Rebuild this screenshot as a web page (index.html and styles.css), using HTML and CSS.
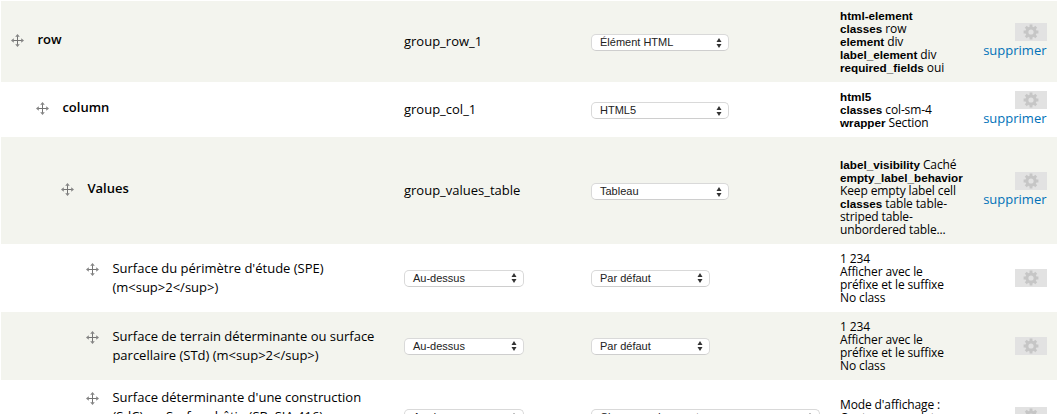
FILE: index.html
```html
<!DOCTYPE html>
<html lang="fr">
<head>
<meta charset="utf-8">
<title>Gérer l'affichage</title>
<link rel="stylesheet" href="styles.css">
</head>
<body>
<svg width="0" height="0" class="defs">
  <symbol id="move" viewBox="0 0 13 13">
    <path d="M6.5 1.5v10M1.5 6.5h10" stroke="#747474" stroke-width="1" fill="none"/>
    <path d="M6.5 0l2.3 2.8H4.2zM6.5 13l2.3-2.8H4.2zM0 6.5l2.8-2.3v4.6zM13 6.5l-2.8-2.3v4.6z" fill="#858585"/>
  </symbol>
  <symbol id="gear" viewBox="0 0 16 16">
    <circle cx="8" cy="8" r="4.1" fill="none" stroke="#c6c6c6" stroke-width="3"/>
    <path d="M8 .6v2.6M8 12.8v2.6M.6 8h2.6M12.8 8h2.6M2.8 2.8l1.9 1.9M11.3 11.3l1.9 1.9M2.8 13.2l1.9-1.9M11.3 4.7l1.9-1.9" stroke="#c6c6c6" stroke-width="2.8" fill="none"/>
  </symbol>
  <symbol id="arrows" viewBox="0 0 6 10">
    <path d="M3 0l2.5 4H.5zM3 10l2.5-4H.5z" fill="#333"/>
  </symbol>
</svg>
<main class="table">
  <div class="row h-row group odd">
    <div class="name"><svg class="move"><use href="#move"/></svg><b class="label">row</b></div>
    <div class="machine">group_row_1</div>
    <div><span class="select wide">Élément HTML<svg><use href="#arrows"/></svg></span></div>
    <div class="summary"><b>html-element</b><br><b>classes</b> row<br><b>element</b> div<br><b>label_element</b> div<br><b>required_fields</b> oui</div>
    <div class="actions"><span class="gear"><svg><use href="#gear"/></svg></span><a>supprimer</a></div>
  </div>
  <div class="row h-column group">
    <div class="name depth-1"><svg class="move"><use href="#move"/></svg><b class="label">column</b></div>
    <div class="machine">group_col_1</div>
    <div><span class="select wide">HTML5<svg><use href="#arrows"/></svg></span></div>
    <div class="summary"><b>html5</b><br><b>classes</b> col-sm-4<br><b>wrapper</b> Section</div>
    <div class="actions"><span class="gear"><svg><use href="#gear"/></svg></span><a>supprimer</a></div>
  </div>
  <div class="row h-values group odd">
    <div class="name depth-2"><svg class="move"><use href="#move"/></svg><b class="label">Values</b></div>
    <div class="machine">group_values_table</div>
    <div><span class="select wide">Tableau<svg><use href="#arrows"/></svg></span></div>
    <div class="summary"><br><b>label_visibility</b> Caché<br><b>empty_label_behavior</b><br>Keep empty label cell<br><b>classes</b> table table-<br>striped table-<br>unbordered table...</div>
    <div class="actions"><span class="gear"><svg><use href="#gear"/></svg></span><a>supprimer</a></div>
  </div>
  <div class="row h-field">
    <div class="name depth-3"><svg class="move"><use href="#move"/></svg><span class="label">Surface du périmètre d'étude (SPE)<br>(m&lt;sup&gt;2&lt;/sup&gt;)</span></div>
    <div><span class="select">Au-dessus<svg><use href="#arrows"/></svg></span></div>
    <div><span class="select format">Par défaut<svg><use href="#arrows"/></svg></span></div>
    <div class="summary">1 234<br>Afficher avec le<br>préfixe et le suffixe<br>No class</div>
    <div class="actions"><span class="gear"><svg><use href="#gear"/></svg></span></div>
  </div>
  <div class="row h-field odd">
    <div class="name depth-3"><svg class="move"><use href="#move"/></svg><span class="label">Surface de terrain déterminante ou surface<br>parcellaire (STd) (m&lt;sup&gt;2&lt;/sup&gt;)</span></div>
    <div><span class="select">Au-dessus<svg><use href="#arrows"/></svg></span></div>
    <div><span class="select format">Par défaut<svg><use href="#arrows"/></svg></span></div>
    <div class="summary">1 234<br>Afficher avec le<br>préfixe et le suffixe<br>No class</div>
    <div class="actions"><span class="gear"><svg><use href="#gear"/></svg></span></div>
  </div>
  <div class="row h-last">
    <div class="name depth-3"><svg class="move"><use href="#move"/></svg><span class="label">Surface déterminante d'une construction<br>(SdC) ou Surface bâtie (SB, SIA 416)</span></div>
    <div><span class="select">Au-dessus<svg><use href="#arrows"/></svg></span></div>
    <div><span class="select widest">Champ rendu avec t<svg><use href="#arrows"/></svg></span></div>
    <div class="summary">Mode d'affichage :<br>Contenu complet</div>
    <div class="actions"><span class="gear"><svg><use href="#gear"/></svg></span></div>
  </div>
</main>
</body>
</html>
```

FILE: styles.css
```css
* { box-sizing: border-box; }
html { overflow: hidden; }
body {
  margin: 0;
  height: 414px;
  overflow: hidden;
  background: #fff;
  color: #000;
  font: 13px/19px "Open Sans", sans-serif;
}
.defs { display: none; }
.table { height: 414px; padding: 1px 1px 0; overflow: hidden; }
.row {
  display: grid;
  grid-template-columns: 403px 187px 249px minmax(0, 1fr) 90px;
  align-items: center;
  padding-right: 10px;
  white-space: nowrap;
}
.odd { background: #f3f4ee; }
.h-row { height: 81px; }
.h-column { height: 55px; }
.h-values { height: 107px; }
.h-field { height: 68px; }
.h-last { height: 34px; align-items: start; overflow: hidden; }
.h-last .name { padding-top: 8px; }
.h-last .select { margin-top: 29px; }
.h-last .summary { padding-top: 18px; }
.h-last .gear { margin-top: 27px; }
.name {
  display: flex;
  align-items: flex-start;
  gap: 13px;
  padding-left: 10px;
}
.name b { font-weight: 600; }
.label { padding-left: .4px; }
.group .name { padding-bottom: 5px; }
.group .select { margin-top: 2px; }
.depth-1 { padding-left: 35px; }
.depth-2 { padding-left: 60px; }
.depth-3 { padding-left: 85px; }
.move { flex: none; width: 13px; height: 13px; margin-top: 4px; }
.select {
  display: flex;
  align-items: center;
  justify-content: space-between;
  width: 120px;
  height: 17px;
  padding: 0 6px 0 8px;
  border: 1px solid #d9d9d9;
  border-bottom-color: #cecece;
  border-radius: 5px;
  background: #fff;
  color: #222;
  font: 11px/15px "Liberation Sans", sans-serif;
}
.select svg { width: 6px; height: 10px; }
.wide { width: 138px; }
.format { width: 119px; }
.widest { width: 229px; }
.summary { font-size: 12px; line-height: 13px; letter-spacing: -.12px; }
.summary b { font: bold 11.7px/1px "Liberation Sans", sans-serif; letter-spacing: 0; }
.actions {
  display: flex;
  flex-direction: column;
  align-items: flex-end;
}
.actions a { padding-right: .5px; color: #0071b8; }
.gear {
  display: grid;
  place-items: center;
  width: 32px;
  height: 18px;
  background: #e2e2e2;
}
.gear svg { width: 16px; height: 16px; }
```
